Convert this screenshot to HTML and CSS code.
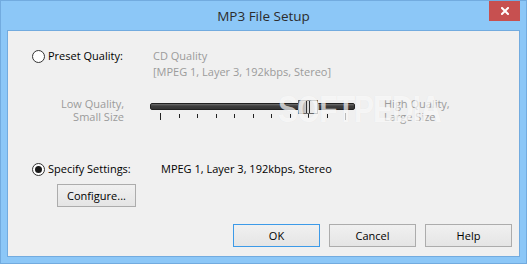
FILE: index.html
```html
<!DOCTYPE html>
<html lang="en">
<head>
    <meta charset="UTF-8" />
    <title>MP3 File Setup</title>
    <link rel="stylesheet" href="styles.css">
</head>
<body>
<div class="window">
    <div class="titlebar">
        <span></span>
        <div class="title">MP3 File Setup</div>
        <button class="close" aria-label="Close">
            <svg width="8" height="8" viewBox="0 0 8 8"><path d="M1 1 L7 7 M7 1 L1 7" stroke="#fff" stroke-width="2" stroke-linecap="square"/></svg>
        </button>
    </div>
    <div class="client">
        <div class="row preset">
            <div class="option">
                <span class="radio"></span>
                <span>Preset Quality:</span>
            </div>
            <div class="muted">
                <div>CD Quality</div>
                <div>[MPEG 1, Layer 3, 192kbps, Stereo]</div>
            </div>
        </div>

        <div class="quality">
            <div class="muted end-label left">Low Quality,<br>Small Size</div>
            <div class="slider">
                <div class="track"></div>
                <div class="thumb"><i></i><i></i></div>
                <div class="ticks">
                    <i class="long"></i><i></i><i></i><i></i><i></i><i></i><i></i><i></i><i></i><i></i><i class="long"></i>
                </div>
            </div>
            <div class="muted end-label">High Quality,<br>Large Size</div>
            <div class="watermark">SOFTPEDIA</div>
        </div>

        <div class="row specify">
            <div class="option">
                <span class="radio checked"></span>
                <span>Specify Settings:</span>
            </div>
            <div>MPEG 1, Layer 3, 192kbps, Stereo</div>
        </div>

        <div class="configure">
            <button class="btn">Configure...</button>
        </div>

        <div class="actions">
            <button class="btn default">OK</button>
            <button class="btn">Cancel</button>
            <button class="btn">Help</button>
        </div>
    </div>
</div>
</body>
</html>
```

FILE: styles.css
```css
:root {
    --frame: #8cc7f7;
    --frame-edge: #72abdf;
    --face: #f0f0f0;
    --muted: #9b9b9b;
    --text: #000;
}
* { margin: 0; padding: 0; box-sizing: border-box; }
body {
    font-family: 'Open Sans', 'Noto Sans', sans-serif;
    font-size: 11px;
    line-height: 16px;
    color: var(--text);
    background: #fff;
}
.window {
    width: 527px;
    height: 264px;
    background: var(--frame);
    border: 1px solid var(--frame-edge);
    padding: 0 6px 6px;
    display: flex;
    flex-direction: column;
}
.titlebar {
    height: 29px;
    display: grid;
    grid-template-columns: 1fr auto 1fr;
    align-items: start;
}
.title {
    font-size: 13.5px;
    line-height: 20px;
    padding-top: 5px;
    color: #2c2c2c;
}
.close {
    justify-self: end;
    width: 31px;
    height: 20px;
    border: none;
    background: #c75050;
    display: flex;
    align-items: center;
    justify-content: center;
}
.client {
    flex: 1;
    background: var(--face);
    border: 1px solid var(--frame-edge);
    padding: 17px 7px 0 0;
    display: flex;
    flex-direction: column;
}
.row {
    display: grid;
    padding-left: 24px;
}
.preset { grid-template-columns: 121px 1fr; }
.specify { grid-template-columns: 129px 1fr; margin-top: 38px; }
.option {
    display: flex;
    align-items: center;
    gap: 3px;
    height: 16px;
}
.radio {
    width: 13px;
    height: 13px;
    border: 1px solid #333;
    border-radius: 50%;
    background: #fff;
    display: flex;
    align-items: center;
    justify-content: center;
}
.radio.checked::after {
    content: '';
    width: 7px;
    height: 7px;
    border-radius: 50%;
    background: #1a1a1a;
}
.muted { color: var(--muted); }

.quality {
    position: relative;
    display: flex;
    margin-top: 17px;
    line-height: 13px;
}
.end-label { width: 120px; }
.end-label.left {
    width: 116px;
    text-align: right;
    margin-right: 26px;
}
.slider {
    position: relative;
    width: 205px;
    height: 23px;
    margin-right: 29px;
}
.track {
    margin-top: 6px;
    height: 7px;
    border: 1px solid #222;
    border-radius: 2px;
    background: linear-gradient(#707070, #3e3e3e 40%, #353535);
}
.thumb {
    position: absolute;
    left: 148px;
    top: 3px;
    width: 20px;
    height: 14px;
    border: 1px solid #6a6a6a;
    background: linear-gradient(90deg, #9a9a9a, #c8c8c8 35%, #e6e6e6 60%, #f2f2f2);
    display: flex;
    justify-content: center;
    gap: 2px;
}
.thumb i {
    width: 1px;
    background: #333;
}
.ticks {
    display: flex;
    justify-content: space-between;
    align-items: flex-start;
    padding: 0 9px 0 10px;
    margin-top: 3px;
}
.ticks i {
    width: 1px;
    height: 4px;
    margin-top: 1px;
    background: #222;
}
.ticks i.long {
    height: 7px;
    margin-top: 0;
}
.watermark {
    position: absolute;
    left: 270px;
    top: 0;
    font-family: 'Liberation Sans', sans-serif;
    font-weight: 700;
    font-size: 30px;
    line-height: 26px;
    letter-spacing: -1px;
    color: rgba(255, 255, 255, 0.7);
    text-shadow: 0 0 1px rgba(0, 0, 0, 0.06);
    transform: scaleY(1.2);
    pointer-events: none;
}

.configure {
    padding-left: 49px;
    margin-top: 7px;
}
.btn {
    font: inherit;
    color: var(--text);
    height: 23px;
    border: 1px solid #acacac;
    background: linear-gradient(#f0f0f0, #e5e5e5);
}
.configure .btn { width: 79px; }
.actions {
    display: flex;
    justify-content: flex-end;
    gap: 9px;
    margin-top: 17px;
}
.actions .btn { width: 87px; }
.btn.default { border-color: #3c9ae8; }
```
